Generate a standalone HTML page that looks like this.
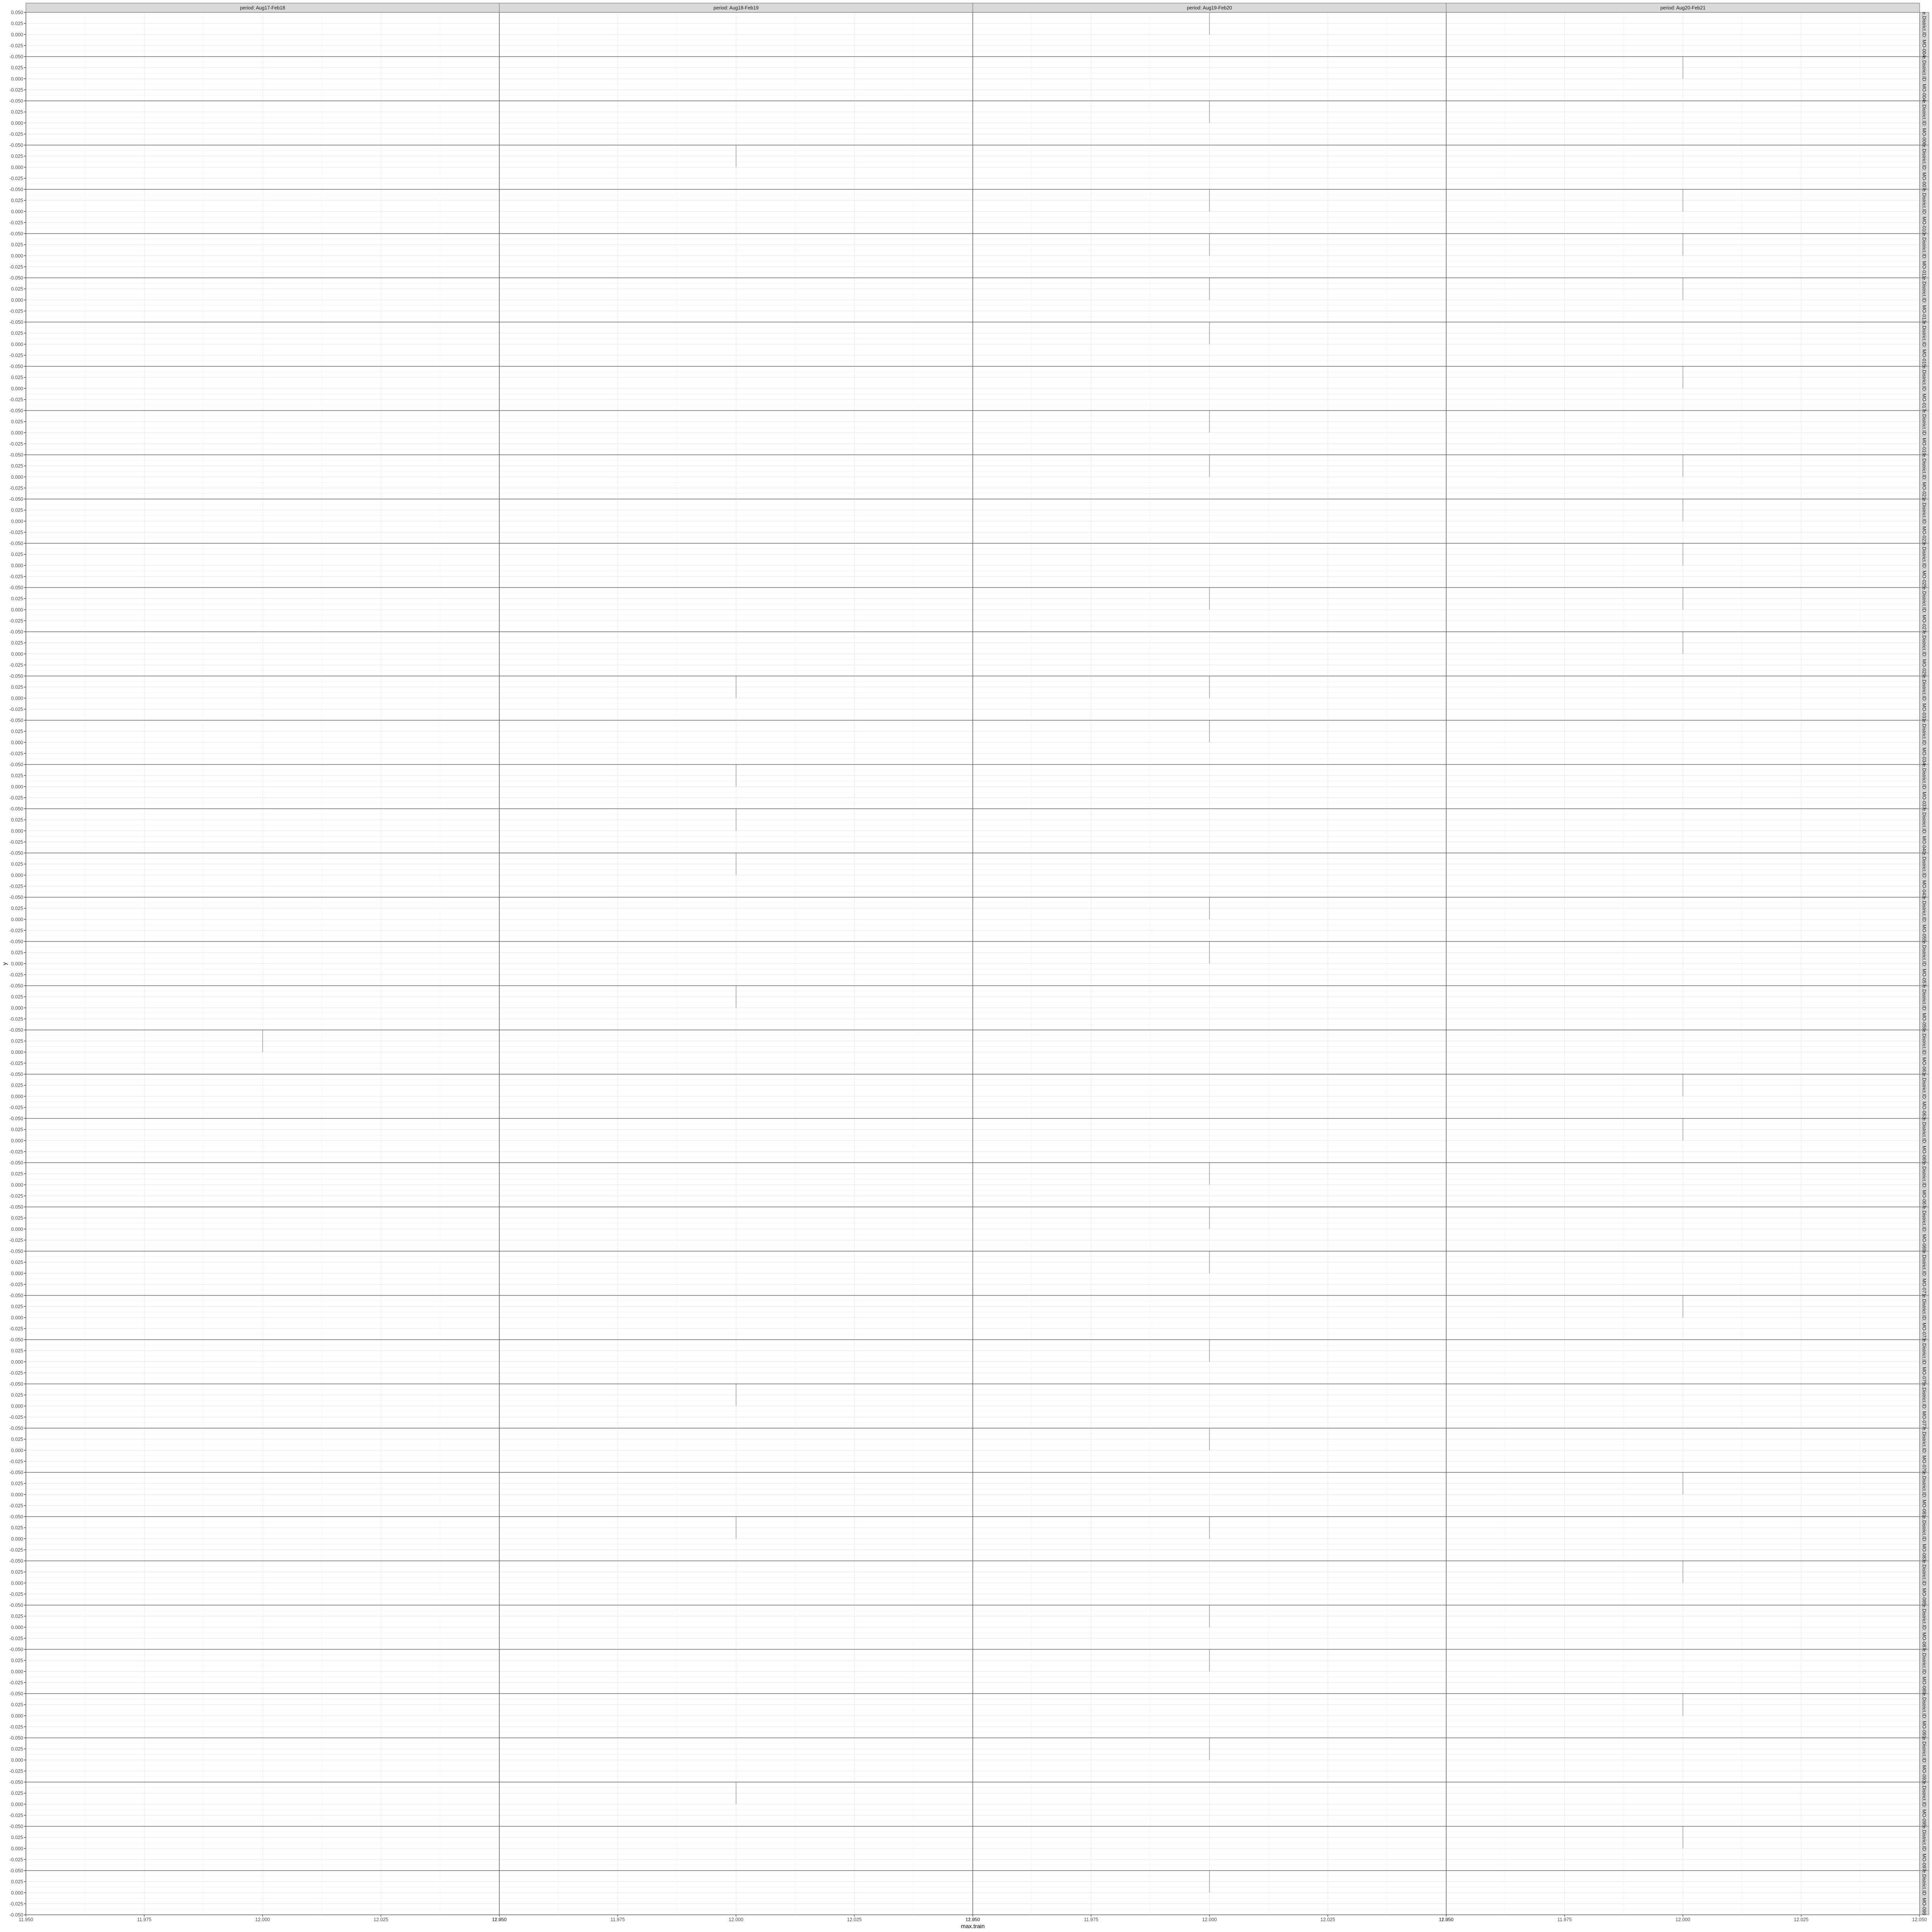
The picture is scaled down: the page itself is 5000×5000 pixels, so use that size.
<!DOCTYPE html>
<html><head><meta charset="utf-8"><style>
html,body{margin:0;padding:0;background:#fff}
svg{display:block}
text{font-family:"Liberation Sans",Arial,sans-serif}
.yl{font-size:12.5px;fill:#4d4d4d;text-anchor:end}
.xl{font-size:12.5px;fill:#4d4d4d;text-anchor:middle}
.st{font-size:12.5px;fill:#1a1a1a;text-anchor:middle}
</style></head><body>
<svg width="5000" height="5000" viewBox="0 0 5000 5000" xmlns="http://www.w3.org/2000/svg">
<defs>
<pattern id="g" patternUnits="userSpaceOnUse" x="67" y="32" width="306.25" height="114.5">
<rect width="306.25" height="114.5" fill="#fff"/>
<g stroke="#f4f4f4" stroke-width="1">
<line x1="0" y1="14.31" x2="306.25" y2="14.31"/><line x1="0" y1="42.94" x2="306.25" y2="42.94"/>
<line x1="0" y1="71.56" x2="306.25" y2="71.56"/><line x1="0" y1="100.19" x2="306.25" y2="100.19"/>
<line x1="153.1" y1="0" x2="153.1" y2="114.5"/>
</g>
<g stroke="#ebebeb" stroke-width="1.4">
<line x1="0" y1="28.625" x2="306.25" y2="28.625"/><line x1="0" y1="57.25" x2="306.25" y2="57.25"/>
<line x1="0" y1="85.875" x2="306.25" y2="85.875"/>
<line x1="0.5" y1="0" x2="0.5" y2="114.5"/>
</g>
</pattern>
<pattern id="yt" patternUnits="userSpaceOnUse" x="0" y="31.3" width="10" height="28.625">
<line x1="0" y1="0.7" x2="10" y2="0.7" stroke="#333" stroke-width="1.4"/>
</pattern>
</defs>
<rect x="67" y="32" width="4901" height="4923.5" fill="url(#g)"/>
<rect x="62" y="31" width="5" height="4926" fill="url(#yt)"/>
<!-- x ticks -->
<g stroke="#333" stroke-width="1.4">
<line x1="67" y1="4955" x2="67" y2="4960"/><line x1="373.25" y1="4955" x2="373.25" y2="4960"/><line x1="679.5" y1="4955" x2="679.5" y2="4960"/><line x1="985.75" y1="4955" x2="985.75" y2="4960"/>
<line x1="1292.25" y1="4955" x2="1292.25" y2="4960"/><line x1="1598.5" y1="4955" x2="1598.5" y2="4960"/><line x1="1904.75" y1="4955" x2="1904.75" y2="4960"/><line x1="2211" y1="4955" x2="2211" y2="4960"/>
<line x1="2517.5" y1="4955" x2="2517.5" y2="4960"/><line x1="2823.75" y1="4955" x2="2823.75" y2="4960"/><line x1="3130" y1="4955" x2="3130" y2="4960"/><line x1="3436.25" y1="4955" x2="3436.25" y2="4960"/>
<line x1="3742.75" y1="4955" x2="3742.75" y2="4960"/><line x1="4049" y1="4955" x2="4049" y2="4960"/><line x1="4355.25" y1="4955" x2="4355.25" y2="4960"/><line x1="4661.5" y1="4955" x2="4661.5" y2="4960"/><line x1="4967.5" y1="4955" x2="4967.5" y2="4960"/>
</g>
<!-- segments -->
<g stroke="#9e9e9e" stroke-width="1.6">
<line x1="3130" y1="32" x2="3130" y2="89.25"/>
<line x1="4355.4" y1="146.5" x2="4355.4" y2="203.75"/>
<line x1="3130" y1="261" x2="3130" y2="318.25"/>
<line x1="1904.9" y1="375.5" x2="1904.9" y2="432.75"/>
<line x1="3130" y1="490" x2="3130" y2="547.25"/><line x1="4355.4" y1="490" x2="4355.4" y2="547.25"/>
<line x1="3130" y1="604.5" x2="3130" y2="661.75"/><line x1="4355.4" y1="604.5" x2="4355.4" y2="661.75"/>
<line x1="3130" y1="719" x2="3130" y2="776.25"/><line x1="4355.4" y1="719" x2="4355.4" y2="776.25"/>
<line x1="3130" y1="833.5" x2="3130" y2="890.75"/>
<line x1="4355.4" y1="948" x2="4355.4" y2="1005.25"/>
<line x1="3130" y1="1062.5" x2="3130" y2="1119.75"/>
<line x1="3130" y1="1177" x2="3130" y2="1234.25"/><line x1="4355.4" y1="1177" x2="4355.4" y2="1234.25"/>
<line x1="4355.4" y1="1291.5" x2="4355.4" y2="1348.75"/>
<line x1="4355.4" y1="1406" x2="4355.4" y2="1463.25"/>
<line x1="3130" y1="1520.5" x2="3130" y2="1577.75"/><line x1="4355.4" y1="1520.5" x2="4355.4" y2="1577.75"/>
<line x1="4355.4" y1="1635" x2="4355.4" y2="1692.25"/>
<line x1="1904.9" y1="1749.5" x2="1904.9" y2="1806.75"/><line x1="3130" y1="1749.5" x2="3130" y2="1806.75"/>
<line x1="3130" y1="1864" x2="3130" y2="1921.25"/>
<line x1="1904.9" y1="1978.5" x2="1904.9" y2="2035.75"/>
<line x1="1904.9" y1="2093" x2="1904.9" y2="2150.25"/>
<line x1="1904.9" y1="2207.5" x2="1904.9" y2="2264.75"/>
<line x1="3130" y1="2322" x2="3130" y2="2379.25"/>
<line x1="3130" y1="2436.5" x2="3130" y2="2493.75"/>
<line x1="1904.9" y1="2551" x2="1904.9" y2="2608.25"/>
<line x1="679.6" y1="2665.5" x2="679.6" y2="2722.75"/>
<line x1="4355.4" y1="2780" x2="4355.4" y2="2837.25"/>
<line x1="4355.4" y1="2894.5" x2="4355.4" y2="2951.75"/>
<line x1="3130" y1="3009" x2="3130" y2="3066.25"/>
<line x1="3130" y1="3123.5" x2="3130" y2="3180.75"/>
<line x1="3130" y1="3238" x2="3130" y2="3295.25"/>
<line x1="4355.4" y1="3352.5" x2="4355.4" y2="3409.75"/>
<line x1="3130" y1="3467" x2="3130" y2="3524.25"/>
<line x1="1904.9" y1="3581.5" x2="1904.9" y2="3638.75"/>
<line x1="3130" y1="3696" x2="3130" y2="3753.25"/>
<line x1="4355.4" y1="3810.5" x2="4355.4" y2="3867.75"/>
<line x1="1904.9" y1="3925" x2="1904.9" y2="3982.25"/><line x1="3130" y1="3925" x2="3130" y2="3982.25"/>
<line x1="4355.4" y1="4039.5" x2="4355.4" y2="4096.75"/>
<line x1="3130" y1="4154" x2="3130" y2="4211.25"/>
<line x1="3130" y1="4268.5" x2="3130" y2="4325.75"/>
<line x1="4355.4" y1="4383" x2="4355.4" y2="4440.25"/>
<line x1="3130" y1="4497.5" x2="3130" y2="4554.75"/>
<line x1="1904.9" y1="4612" x2="1904.9" y2="4669.25"/>
<line x1="4355.4" y1="4726.5" x2="4355.4" y2="4783.75"/>
<line x1="3130" y1="4841" x2="3130" y2="4898.25"/>
</g>
<!-- panel borders -->
<g stroke="#666" stroke-width="1.6" fill="none">
<rect x="67" y="32" width="4901" height="4923.5"/>
<line x1="1292.25" y1="32" x2="1292.25" y2="4955.5"/>
<line x1="2517.5" y1="32" x2="2517.5" y2="4955.5"/>
<line x1="3742.75" y1="32" x2="3742.75" y2="4955.5"/>
<path d="M67 146.5H4968M67 261H4968M67 375.5H4968M67 490H4968M67 604.5H4968M67 719H4968M67 833.5H4968M67 948H4968M67 1062.5H4968M67 1177H4968M67 1291.5H4968M67 1406H4968M67 1520.5H4968M67 1635H4968M67 1749.5H4968M67 1864H4968M67 1978.5H4968M67 2093H4968M67 2207.5H4968M67 2322H4968M67 2436.5H4968M67 2551H4968M67 2665.5H4968M67 2780H4968M67 2894.5H4968M67 3009H4968M67 3123.5H4968M67 3238H4968M67 3352.5H4968M67 3467H4968M67 3581.5H4968M67 3696H4968M67 3810.5H4968M67 3925H4968M67 4039.5H4968M67 4154H4968M67 4268.5H4968M67 4383H4968M67 4497.5H4968M67 4612H4968M67 4726.5H4968M67 4841H4968"/>
</g>
<!-- top strips -->
<g fill="#d9d9d9" stroke="#8a8a8a" stroke-width="1.4">
<rect x="67" y="8" width="1225.25" height="24"/>
<rect x="1292.25" y="8" width="1225.25" height="24"/>
<rect x="2517.5" y="8" width="1225.25" height="24"/>
<rect x="3742.75" y="8" width="1225.25" height="24"/>
</g>
<text class="st" x="679.6" y="24.5">period: Aug17-Feb18</text>
<text class="st" x="1904.9" y="24.5">period: Aug18-Feb19</text>
<text class="st" x="3130" y="24.5">period: Aug19-Feb20</text>
<text class="st" x="4355.4" y="24.5">period: Aug20-Feb21</text>
<!-- right strips -->
<rect x="4968" y="32" width="24" height="4923.5" fill="#d9d9d9" stroke="#8a8a8a" stroke-width="1.4"/>
<path d="M4968 146.5H4992M4968 261H4992M4968 375.5H4992M4968 490H4992M4968 604.5H4992M4968 719H4992M4968 833.5H4992M4968 948H4992M4968 1062.5H4992M4968 1177H4992M4968 1291.5H4992M4968 1406H4992M4968 1520.5H4992M4968 1635H4992M4968 1749.5H4992M4968 1864H4992M4968 1978.5H4992M4968 2093H4992M4968 2207.5H4992M4968 2322H4992M4968 2436.5H4992M4968 2551H4992M4968 2665.5H4992M4968 2780H4992M4968 2894.5H4992M4968 3009H4992M4968 3123.5H4992M4968 3238H4992M4968 3352.5H4992M4968 3467H4992M4968 3581.5H4992M4968 3696H4992M4968 3810.5H4992M4968 3925H4992M4968 4039.5H4992M4968 4154H4992M4968 4268.5H4992M4968 4383H4992M4968 4497.5H4992M4968 4612H4992M4968 4726.5H4992M4968 4841H4992" stroke="#8a8a8a" stroke-width="1.4"/>
<g class="st">
<text class="st" transform="translate(4975.5,89.25) rotate(90)">e.District.ID: MO-004</text>
<text class="st" transform="translate(4975.5,203.75) rotate(90)">e.District.ID: MO-004</text>
<text class="st" transform="translate(4975.5,318.25) rotate(90)">e.District.ID: MO-006</text>
<text class="st" transform="translate(4975.5,432.75) rotate(90)">e.District.ID: MO-007</text>
<text class="st" transform="translate(4975.5,547.25) rotate(90)">e.District.ID: MO-010</text>
<text class="st" transform="translate(4975.5,661.75) rotate(90)">e.District.ID: MO-011</text>
<text class="st" transform="translate(4975.5,776.25) rotate(90)">e.District.ID: MO-013</text>
<text class="st" transform="translate(4975.5,890.75) rotate(90)">e.District.ID: MO-015</text>
<text class="st" transform="translate(4975.5,1005.25) rotate(90)">e.District.ID: MO-017</text>
<text class="st" transform="translate(4975.5,1119.75) rotate(90)">e.District.ID: MO-019</text>
<text class="st" transform="translate(4975.5,1234.25) rotate(90)">e.District.ID: MO-021</text>
<text class="st" transform="translate(4975.5,1348.75) rotate(90)">e.District.ID: MO-023</text>
<text class="st" transform="translate(4975.5,1463.25) rotate(90)">e.District.ID: MO-025</text>
<text class="st" transform="translate(4975.5,1577.75) rotate(90)">e.District.ID: MO-027</text>
<text class="st" transform="translate(4975.5,1692.25) rotate(90)">e.District.ID: MO-029</text>
<text class="st" transform="translate(4975.5,1806.75) rotate(90)">e.District.ID: MO-031</text>
<text class="st" transform="translate(4975.5,1921.25) rotate(90)">e.District.ID: MO-034</text>
<text class="st" transform="translate(4975.5,2035.75) rotate(90)">e.District.ID: MO-037</text>
<text class="st" transform="translate(4975.5,2150.25) rotate(90)">e.District.ID: MO-040</text>
<text class="st" transform="translate(4975.5,2264.75) rotate(90)">e.District.ID: MO-043</text>
<text class="st" transform="translate(4975.5,2379.25) rotate(90)">e.District.ID: MO-055</text>
<text class="st" transform="translate(4975.5,2493.75) rotate(90)">e.District.ID: MO-057</text>
<text class="st" transform="translate(4975.5,2608.25) rotate(90)">e.District.ID: MO-059</text>
<text class="st" transform="translate(4975.5,2722.75) rotate(90)">e.District.ID: MO-061</text>
<text class="st" transform="translate(4975.5,2837.25) rotate(90)">e.District.ID: MO-063</text>
<text class="st" transform="translate(4975.5,2951.75) rotate(90)">e.District.ID: MO-065</text>
<text class="st" transform="translate(4975.5,3066.25) rotate(90)">e.District.ID: MO-067</text>
<text class="st" transform="translate(4975.5,3180.75) rotate(90)">e.District.ID: MO-069</text>
<text class="st" transform="translate(4975.5,3295.25) rotate(90)">e.District.ID: MO-071</text>
<text class="st" transform="translate(4975.5,3409.75) rotate(90)">e.District.ID: MO-073</text>
<text class="st" transform="translate(4975.5,3524.25) rotate(90)">e.District.ID: MO-075</text>
<text class="st" transform="translate(4975.5,3638.75) rotate(90)">e.District.ID: MO-077</text>
<text class="st" transform="translate(4975.5,3753.25) rotate(90)">e.District.ID: MO-079</text>
<text class="st" transform="translate(4975.5,3867.75) rotate(90)">e.District.ID: MO-081</text>
<text class="st" transform="translate(4975.5,3982.25) rotate(90)">e.District.ID: MO-083</text>
<text class="st" transform="translate(4975.5,4096.75) rotate(90)">e.District.ID: MO-085</text>
<text class="st" transform="translate(4975.5,4211.25) rotate(90)">e.District.ID: MO-087</text>
<text class="st" transform="translate(4975.5,4325.75) rotate(90)">e.District.ID: MO-089</text>
<text class="st" transform="translate(4975.5,4440.25) rotate(90)">e.District.ID: MO-091</text>
<text class="st" transform="translate(4975.5,4554.75) rotate(90)">e.District.ID: MO-093</text>
<text class="st" transform="translate(4975.5,4669.25) rotate(90)">e.District.ID: MO-095</text>
<text class="st" transform="translate(4975.5,4783.75) rotate(90)">e.District.ID: MO-097</text>
<text class="st" transform="translate(4975.5,4898.25) rotate(90)">e.District.ID: MO-099</text>
</g>
<!-- y labels -->
<g class="yl">
<g transform="translate(0,32)"><text class="yl" x="60" y="4.5">0.050</text><text class="yl" x="60" y="33.1">0.025</text><text class="yl" x="60" y="61.75">0.000</text><text class="yl" x="60" y="90.4">-0.025</text></g>
<g transform="translate(0,146.5)"><text class="yl" x="60" y="4.5">-0.050</text><text class="yl" x="60" y="33.1">0.025</text><text class="yl" x="60" y="61.75">0.000</text><text class="yl" x="60" y="90.4">-0.025</text></g>
<g transform="translate(0,261)"><text class="yl" x="60" y="4.5">-0.050</text><text class="yl" x="60" y="33.1">0.025</text><text class="yl" x="60" y="61.75">0.000</text><text class="yl" x="60" y="90.4">-0.025</text></g>
<g transform="translate(0,375.5)"><text class="yl" x="60" y="4.5">-0.050</text><text class="yl" x="60" y="33.1">0.025</text><text class="yl" x="60" y="61.75">0.000</text><text class="yl" x="60" y="90.4">-0.025</text></g>
<g transform="translate(0,490)"><text class="yl" x="60" y="4.5">-0.050</text><text class="yl" x="60" y="33.1">0.025</text><text class="yl" x="60" y="61.75">0.000</text><text class="yl" x="60" y="90.4">-0.025</text></g>
<g transform="translate(0,604.5)"><text class="yl" x="60" y="4.5">-0.050</text><text class="yl" x="60" y="33.1">0.025</text><text class="yl" x="60" y="61.75">0.000</text><text class="yl" x="60" y="90.4">-0.025</text></g>
<g transform="translate(0,719)"><text class="yl" x="60" y="4.5">-0.050</text><text class="yl" x="60" y="33.1">0.025</text><text class="yl" x="60" y="61.75">0.000</text><text class="yl" x="60" y="90.4">-0.025</text></g>
<g transform="translate(0,833.5)"><text class="yl" x="60" y="4.5">-0.050</text><text class="yl" x="60" y="33.1">0.025</text><text class="yl" x="60" y="61.75">0.000</text><text class="yl" x="60" y="90.4">-0.025</text></g>
<g transform="translate(0,948)"><text class="yl" x="60" y="4.5">-0.050</text><text class="yl" x="60" y="33.1">0.025</text><text class="yl" x="60" y="61.75">0.000</text><text class="yl" x="60" y="90.4">-0.025</text></g>
<g transform="translate(0,1062.5)"><text class="yl" x="60" y="4.5">-0.050</text><text class="yl" x="60" y="33.1">0.025</text><text class="yl" x="60" y="61.75">0.000</text><text class="yl" x="60" y="90.4">-0.025</text></g>
<g transform="translate(0,1177)"><text class="yl" x="60" y="4.5">-0.050</text><text class="yl" x="60" y="33.1">0.025</text><text class="yl" x="60" y="61.75">0.000</text><text class="yl" x="60" y="90.4">-0.025</text></g>
<g transform="translate(0,1291.5)"><text class="yl" x="60" y="4.5">-0.050</text><text class="yl" x="60" y="33.1">0.025</text><text class="yl" x="60" y="61.75">0.000</text><text class="yl" x="60" y="90.4">-0.025</text></g>
<g transform="translate(0,1406)"><text class="yl" x="60" y="4.5">-0.050</text><text class="yl" x="60" y="33.1">0.025</text><text class="yl" x="60" y="61.75">0.000</text><text class="yl" x="60" y="90.4">-0.025</text></g>
<g transform="translate(0,1520.5)"><text class="yl" x="60" y="4.5">-0.050</text><text class="yl" x="60" y="33.1">0.025</text><text class="yl" x="60" y="61.75">0.000</text><text class="yl" x="60" y="90.4">-0.025</text></g>
<g transform="translate(0,1635)"><text class="yl" x="60" y="4.5">-0.050</text><text class="yl" x="60" y="33.1">0.025</text><text class="yl" x="60" y="61.75">0.000</text><text class="yl" x="60" y="90.4">-0.025</text></g>
<g transform="translate(0,1749.5)"><text class="yl" x="60" y="4.5">-0.050</text><text class="yl" x="60" y="33.1">0.025</text><text class="yl" x="60" y="61.75">0.000</text><text class="yl" x="60" y="90.4">-0.025</text></g>
<g transform="translate(0,1864)"><text class="yl" x="60" y="4.5">-0.050</text><text class="yl" x="60" y="33.1">0.025</text><text class="yl" x="60" y="61.75">0.000</text><text class="yl" x="60" y="90.4">-0.025</text></g>
<g transform="translate(0,1978.5)"><text class="yl" x="60" y="4.5">-0.050</text><text class="yl" x="60" y="33.1">0.025</text><text class="yl" x="60" y="61.75">0.000</text><text class="yl" x="60" y="90.4">-0.025</text></g>
<g transform="translate(0,2093)"><text class="yl" x="60" y="4.5">-0.050</text><text class="yl" x="60" y="33.1">0.025</text><text class="yl" x="60" y="61.75">0.000</text><text class="yl" x="60" y="90.4">-0.025</text></g>
<g transform="translate(0,2207.5)"><text class="yl" x="60" y="4.5">-0.050</text><text class="yl" x="60" y="33.1">0.025</text><text class="yl" x="60" y="61.75">0.000</text><text class="yl" x="60" y="90.4">-0.025</text></g>
<g transform="translate(0,2322)"><text class="yl" x="60" y="4.5">-0.050</text><text class="yl" x="60" y="33.1">0.025</text><text class="yl" x="60" y="61.75">0.000</text><text class="yl" x="60" y="90.4">-0.025</text></g>
<g transform="translate(0,2436.5)"><text class="yl" x="60" y="4.5">-0.050</text><text class="yl" x="60" y="33.1">0.025</text><text class="yl" x="60" y="61.75">0.000</text><text class="yl" x="60" y="90.4">-0.025</text></g>
<g transform="translate(0,2551)"><text class="yl" x="60" y="4.5">-0.050</text><text class="yl" x="60" y="33.1">0.025</text><text class="yl" x="60" y="61.75">0.000</text><text class="yl" x="60" y="90.4">-0.025</text></g>
<g transform="translate(0,2665.5)"><text class="yl" x="60" y="4.5">-0.050</text><text class="yl" x="60" y="33.1">0.025</text><text class="yl" x="60" y="61.75">0.000</text><text class="yl" x="60" y="90.4">-0.025</text></g>
<g transform="translate(0,2780)"><text class="yl" x="60" y="4.5">-0.050</text><text class="yl" x="60" y="33.1">0.025</text><text class="yl" x="60" y="61.75">0.000</text><text class="yl" x="60" y="90.4">-0.025</text></g>
<g transform="translate(0,2894.5)"><text class="yl" x="60" y="4.5">-0.050</text><text class="yl" x="60" y="33.1">0.025</text><text class="yl" x="60" y="61.75">0.000</text><text class="yl" x="60" y="90.4">-0.025</text></g>
<g transform="translate(0,3009)"><text class="yl" x="60" y="4.5">-0.050</text><text class="yl" x="60" y="33.1">0.025</text><text class="yl" x="60" y="61.75">0.000</text><text class="yl" x="60" y="90.4">-0.025</text></g>
<g transform="translate(0,3123.5)"><text class="yl" x="60" y="4.5">-0.050</text><text class="yl" x="60" y="33.1">0.025</text><text class="yl" x="60" y="61.75">0.000</text><text class="yl" x="60" y="90.4">-0.025</text></g>
<g transform="translate(0,3238)"><text class="yl" x="60" y="4.5">-0.050</text><text class="yl" x="60" y="33.1">0.025</text><text class="yl" x="60" y="61.75">0.000</text><text class="yl" x="60" y="90.4">-0.025</text></g>
<g transform="translate(0,3352.5)"><text class="yl" x="60" y="4.5">-0.050</text><text class="yl" x="60" y="33.1">0.025</text><text class="yl" x="60" y="61.75">0.000</text><text class="yl" x="60" y="90.4">-0.025</text></g>
<g transform="translate(0,3467)"><text class="yl" x="60" y="4.5">-0.050</text><text class="yl" x="60" y="33.1">0.025</text><text class="yl" x="60" y="61.75">0.000</text><text class="yl" x="60" y="90.4">-0.025</text></g>
<g transform="translate(0,3581.5)"><text class="yl" x="60" y="4.5">-0.050</text><text class="yl" x="60" y="33.1">0.025</text><text class="yl" x="60" y="61.75">0.000</text><text class="yl" x="60" y="90.4">-0.025</text></g>
<g transform="translate(0,3696)"><text class="yl" x="60" y="4.5">-0.050</text><text class="yl" x="60" y="33.1">0.025</text><text class="yl" x="60" y="61.75">0.000</text><text class="yl" x="60" y="90.4">-0.025</text></g>
<g transform="translate(0,3810.5)"><text class="yl" x="60" y="4.5">-0.050</text><text class="yl" x="60" y="33.1">0.025</text><text class="yl" x="60" y="61.75">0.000</text><text class="yl" x="60" y="90.4">-0.025</text></g>
<g transform="translate(0,3925)"><text class="yl" x="60" y="4.5">-0.050</text><text class="yl" x="60" y="33.1">0.025</text><text class="yl" x="60" y="61.75">0.000</text><text class="yl" x="60" y="90.4">-0.025</text></g>
<g transform="translate(0,4039.5)"><text class="yl" x="60" y="4.5">-0.050</text><text class="yl" x="60" y="33.1">0.025</text><text class="yl" x="60" y="61.75">0.000</text><text class="yl" x="60" y="90.4">-0.025</text></g>
<g transform="translate(0,4154)"><text class="yl" x="60" y="4.5">-0.050</text><text class="yl" x="60" y="33.1">0.025</text><text class="yl" x="60" y="61.75">0.000</text><text class="yl" x="60" y="90.4">-0.025</text></g>
<g transform="translate(0,4268.5)"><text class="yl" x="60" y="4.5">-0.050</text><text class="yl" x="60" y="33.1">0.025</text><text class="yl" x="60" y="61.75">0.000</text><text class="yl" x="60" y="90.4">-0.025</text></g>
<g transform="translate(0,4383)"><text class="yl" x="60" y="4.5">-0.050</text><text class="yl" x="60" y="33.1">0.025</text><text class="yl" x="60" y="61.75">0.000</text><text class="yl" x="60" y="90.4">-0.025</text></g>
<g transform="translate(0,4497.5)"><text class="yl" x="60" y="4.5">-0.050</text><text class="yl" x="60" y="33.1">0.025</text><text class="yl" x="60" y="61.75">0.000</text><text class="yl" x="60" y="90.4">-0.025</text></g>
<g transform="translate(0,4612)"><text class="yl" x="60" y="4.5">-0.050</text><text class="yl" x="60" y="33.1">0.025</text><text class="yl" x="60" y="61.75">0.000</text><text class="yl" x="60" y="90.4">-0.025</text></g>
<g transform="translate(0,4726.5)"><text class="yl" x="60" y="4.5">-0.050</text><text class="yl" x="60" y="33.1">0.025</text><text class="yl" x="60" y="61.75">0.000</text><text class="yl" x="60" y="90.4">-0.025</text></g>
<g transform="translate(0,4841)"><text class="yl" x="60" y="4.5">-0.050</text><text class="yl" x="60" y="33.1">0.025</text><text class="yl" x="60" y="61.75">0.000</text><text class="yl" x="60" y="90.4">-0.025</text><text class="yl" x="60" y="119">-0.050</text></g>
</g>
<!-- x labels -->
<g>
<text class="xl" x="67" y="4972">11.950</text><text class="xl" x="373.25" y="4972">11.975</text><text class="xl" x="679.5" y="4972">12.000</text><text class="xl" x="985.75" y="4972">12.025</text>
<text class="xl" x="1292.25" y="4972">12.050</text><text class="xl" x="1292.25" y="4972">11.950</text><text class="xl" x="1598.5" y="4972">11.975</text><text class="xl" x="1904.75" y="4972">12.000</text><text class="xl" x="2211" y="4972">12.025</text>
<text class="xl" x="2517.5" y="4972">12.050</text><text class="xl" x="2517.5" y="4972">11.950</text><text class="xl" x="2823.75" y="4972">11.975</text><text class="xl" x="3130" y="4972">12.000</text><text class="xl" x="3436.25" y="4972">12.025</text>
<text class="xl" x="3742.75" y="4972">12.050</text><text class="xl" x="3742.75" y="4972">11.950</text><text class="xl" x="4049" y="4972">11.975</text><text class="xl" x="4355.25" y="4972">12.000</text><text class="xl" x="4661.5" y="4972">12.025</text>
<text class="xl" x="4967.5" y="4972">12.050</text>
</g>
<text x="2517.5" y="4990" text-anchor="middle" font-size="15" fill="#000">max.train</text>
<text transform="translate(17,2494) rotate(-90)" text-anchor="middle" font-size="15" fill="#000">y</text>
</svg>
</body></html>
